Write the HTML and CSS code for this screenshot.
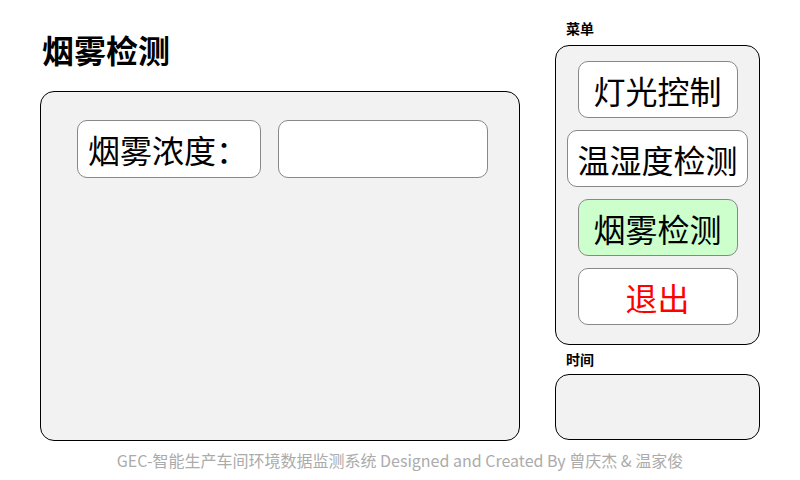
FILE: index.html
```html
<!DOCTYPE html>
<html lang="zh-CN">
<head>
<meta charset="utf-8">
<title>烟雾检测</title>
<link rel="stylesheet" href="styles.css">
</head>
<body>
<div class="screen">
  <div class="main">
    <h1 class="title">烟雾检测</h1>
    <div class="panel main-panel">
      <div class="row">
        <div class="field field-label">烟雾浓度：</div>
        <div class="field field-value"></div>
      </div>
    </div>
  </div>
  <div class="side">
    <div class="side-label">菜单</div>
    <div class="panel menu">
      <div class="btn">灯光控制</div>
      <div class="btn">温湿度检测</div>
      <div class="btn btn-active">烟雾检测</div>
      <div class="btn btn-exit">退出</div>
    </div>
    <div class="side-label side-label-time">时间</div>
    <div class="panel clock"></div>
  </div>
</div>
<footer class="footer">GEC-智能生产车间环境数据监测系统 Designed and Created By 曾庆杰 &amp; 温家俊</footer>
</body>
</html>
```
FILE: styles.css
```css
html, body {
  margin: 0;
  padding: 0;
  background: #ffffff;
}
body {
  width: 800px;
  height: 480px;
  overflow: hidden;
  font-family: "Noto Sans CJK SC", "Noto Sans", sans-serif;
  color: #000;
}
.screen {
  display: flex;
  padding-left: 40px;
  gap: 35px;
  height: 441px;
}
.main {
  width: 480px;
  display: flex;
  flex-direction: column;
}
.title {
  margin: 33px 0 0 2px;
  font-size: 32px;
  line-height: 32px;
  font-weight: 700;
  height: 32px;
}
.panel {
  box-sizing: border-box;
  background: #f2f2f2;
  border: 1px solid #000;
  border-radius: 14px;
}
.main-panel {
  margin-top: 26px;
  height: 350px;
  padding: 28px 0 0 36px;
}
.row {
  display: flex;
  gap: 17px;
}
.field {
  box-sizing: border-box;
  height: 58px;
  background: #fff;
  border: 1px solid #888;
  border-radius: 10px;
  display: flex;
  align-items: center;
  font-size: 32px;
  line-height: 32px;
}
.field-label {
  width: 184px;
  padding-left: 10px;
}
.field-value {
  width: 210px;
}
.side {
  width: 205px;
  display: flex;
  flex-direction: column;
}
.side-label {
  margin: 21px 0 0 11px;
  font-size: 14px;
  line-height: 14px;
  height: 14px;
  font-weight: 700;
}
.side-label-time {
  margin-top: 7px;
}
.menu {
  margin-top: 10px;
  height: 300px;
  padding-top: 15px;
  display: flex;
  flex-direction: column;
  align-items: center;
  gap: 12px;
}
.btn {
  box-sizing: border-box;
  min-width: 160px;
  height: 57px;
  padding: 0 9px;
  background: #fff;
  border: 1px solid #888;
  border-radius: 10px;
  display: flex;
  align-items: center;
  justify-content: center;
  font-size: 32px;
  line-height: 32px;
}
.btn-active {
  background: #ccffcc;
}
.btn-exit {
  color: #ff0000;
}
.clock {
  margin-top: 8px;
  height: 66px;
}
.footer {
  margin-top: 11px;
  text-align: center;
  font-size: 16px;
  line-height: 16px;
  color: #ababab;
}
```
